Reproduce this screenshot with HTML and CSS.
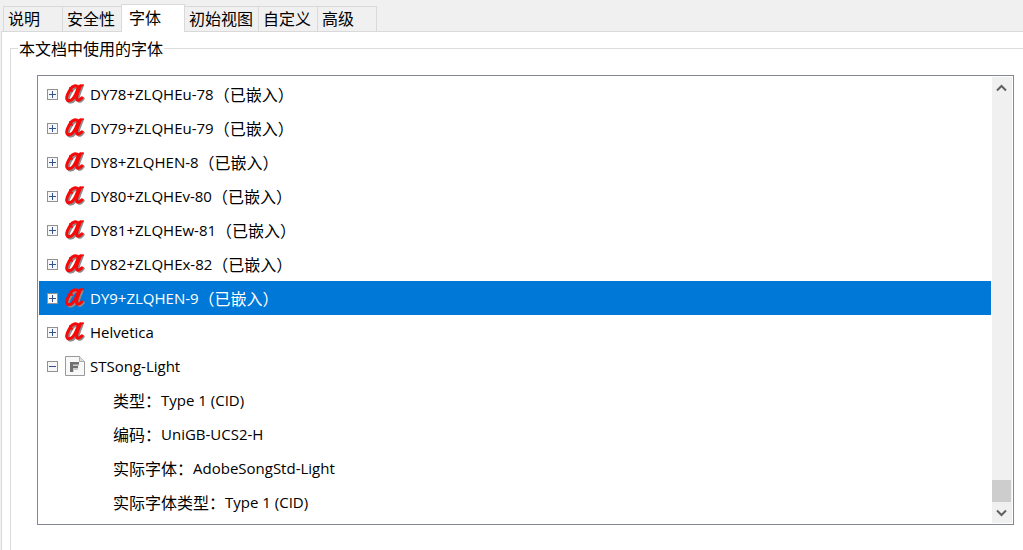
FILE: index.html
```
<!DOCTYPE html>
<html lang="zh-CN">
<head>
    <meta charset="utf-8">
    <title>文档属性</title>
    <link rel="stylesheet" href="styles.css">
</head>
<body>
    <svg class="defs" aria-hidden="true">
        <symbol id="icon-a" viewBox="0 0 20 20">
            <g class="a-shadow" transform="translate(1.500 1.500)">
                <path d="M13 3C11 1 7.500 1.500 5.500 5 3.300 8.500 1 12.500 1.800 15c.8 2.600 4 1.800 6-.3C10.500 12 12 7.500 13 3"/>
                <path d="M15.500 1.500c-1.700 4.500-4.500 9.500-3.800 13 .5 2.200 3 1.500 5-1.300"/>
            </g>
            <g class="a-face">
                <path d="M13.500 3C11 1 7.500 1.500 5.500 5 3.300 8.500 1 12.500 1.800 15c.8 2.600 4 1.800 6-.3C10.500 12 12 7.500 13.500 3"/>
                <path d="M15.500 1.800c-1.700 4.500-4.500 9.500-3.800 13 .5 2.200 3.200 1.500 5.200-1"/>
                <path class="thin" d="M14.500 2L18 1.200M5 4v2.500l2 .3"/>
            </g>
        </symbol>
        <symbol id="icon-f" viewBox="0 0 20 20">
            <path d="M.5.500h14l5 5v14H.5z" fill="#f8f8f8" stroke="#999"/>
            <path d="M14.500.500v5h5" fill="#ddd" stroke="#aaa"/>
            <path d="M6 7h8v3H9v1h4v3H9v2H6z" fill="#ccc"/>
            <path d="M5 6h9v2.500H8V10h5v2H8v4H5z" fill="#707070"/>
        </symbol>
        <symbol id="icon-plus" viewBox="0 0 11 11">
            <rect x=".5" y=".5" width="10" height="10" fill="#f7f7f7" stroke="#919191"/>
            <path d="M2 5.500h7M5.500 2v7" stroke="#34528f"/>
        </symbol>
        <symbol id="icon-minus" viewBox="0 0 11 11">
            <rect x=".5" y=".5" width="10" height="10" fill="#f7f7f7" stroke="#919191"/>
            <path d="M2 5.500h7" stroke="#34528f"/>
        </symbol>
    </svg>

    <div class="tabs" role="tablist">
        <button class="tab" role="tab">说明</button>
        <button class="tab" role="tab">安全性</button>
        <button class="tab active" role="tab" aria-selected="true">字体</button>
        <button class="tab" role="tab">初始视图</button>
        <button class="tab" role="tab">自定义</button>
        <button class="tab" role="tab">高级</button>
    </div>

    <main class="page">
        <fieldset class="group">
            <legend>本文档中使用的字体</legend>
            <div class="listbox">
                <ul class="tree" role="tree">
                    <li class="row" role="treeitem">
                        <button class="toggle" aria-label="展开"><svg><use href="#icon-plus"/></svg></button>
                        <svg class="icon"><use href="#icon-a"/></svg>
                        <span class="latin">DY78+ZLQHEu-78</span><span>（已嵌入）</span>
                    </li>
                    <li class="row" role="treeitem">
                        <button class="toggle" aria-label="展开"><svg><use href="#icon-plus"/></svg></button>
                        <svg class="icon"><use href="#icon-a"/></svg>
                        <span class="latin">DY79+ZLQHEu-79</span><span>（已嵌入）</span>
                    </li>
                    <li class="row" role="treeitem">
                        <button class="toggle" aria-label="展开"><svg><use href="#icon-plus"/></svg></button>
                        <svg class="icon"><use href="#icon-a"/></svg>
                        <span class="latin">DY8+ZLQHEN-8</span><span>（已嵌入）</span>
                    </li>
                    <li class="row" role="treeitem">
                        <button class="toggle" aria-label="展开"><svg><use href="#icon-plus"/></svg></button>
                        <svg class="icon"><use href="#icon-a"/></svg>
                        <span class="latin">DY80+ZLQHEv-80</span><span>（已嵌入）</span>
                    </li>
                    <li class="row" role="treeitem">
                        <button class="toggle" aria-label="展开"><svg><use href="#icon-plus"/></svg></button>
                        <svg class="icon"><use href="#icon-a"/></svg>
                        <span class="latin">DY81+ZLQHEw-81</span><span>（已嵌入）</span>
                    </li>
                    <li class="row" role="treeitem">
                        <button class="toggle" aria-label="展开"><svg><use href="#icon-plus"/></svg></button>
                        <svg class="icon"><use href="#icon-a"/></svg>
                        <span class="latin">DY82+ZLQHEx-82</span><span>（已嵌入）</span>
                    </li>
                    <li class="row selected" role="treeitem" aria-selected="true">
                        <button class="toggle" aria-label="展开"><svg><use href="#icon-plus"/></svg></button>
                        <svg class="icon"><use href="#icon-a"/></svg>
                        <span class="latin">DY9+ZLQHEN-9</span><span>（已嵌入）</span>
                    </li>
                    <li class="row" role="treeitem">
                        <button class="toggle" aria-label="展开"><svg><use href="#icon-plus"/></svg></button>
                        <svg class="icon"><use href="#icon-a"/></svg>
                        <span class="latin">Helvetica</span>
                    </li>
                    <li role="treeitem" aria-expanded="true">
                        <div class="row">
                            <button class="toggle" aria-label="折叠"><svg><use href="#icon-minus"/></svg></button>
                            <svg class="icon"><use href="#icon-f"/></svg>
                            <span class="latin">STSong-Light</span>
                        </div>
                        <ul class="details" role="group">
                            <li class="row"><span>类型：</span><span class="latin">Type 1 (CID)</span></li>
                            <li class="row"><span>编码：</span><span class="latin">UniGB-UCS2-H</span></li>
                            <li class="row"><span>实际字体：</span><span class="latin">AdobeSongStd-Light</span></li>
                            <li class="row"><span>实际字体类型：</span><span class="latin">Type 1 (CID)</span></li>
                        </ul>
                    </li>
                </ul>
                <div class="scrollbar">
                    <button class="arrow" aria-label="向上滚动"><svg viewBox="0 0 11 8"><path d="M1 6.500l4.500-4.500L10 6.500"/></svg></button>
                    <div class="thumb"></div>
                    <button class="arrow" aria-label="向下滚动"><svg viewBox="0 0 11 8"><path d="M1 1.500L5.500 6 10 1.500"/></svg></button>
                </div>
            </div>
        </fieldset>
    </main>
</body>
</html>
```
FILE: styles.css
```
* {
    box-sizing: border-box;
}
body {
    margin: 0;
    height: 100vh;
    display: flex;
    flex-direction: column;
    overflow: hidden;
    background: #f0f0f0;
    color: #000;
    font-family: "Noto Sans CJK SC", sans-serif;
    font-size: 16px;
    line-height: 24px;
}
button {
    font: inherit;
    color: inherit;
    border: 0;
    padding: 0;
    background: none;
}
ul {
    list-style: none;
    margin: 0;
    padding: 0;
}
.defs {
    display: none;
}

/* tabs */
.tabs {
    display: flex;
    align-items: flex-end;
    height: 32px;
    padding-left: 3px;
    flex-shrink: 0;
}
.tab {
    height: 26px;
    min-width: 60px;
    padding: 0 5px 2px 4px;
    margin-right: -1px;
    border: 1px solid #d9d9d9;
    background: #f0f0f0;
    line-height: 22px;
    text-align: left;
    white-space: nowrap;
}
.tab.active {
    height: 28px;
    min-width: 64px;
    padding: 0 7px 4px;
    border-bottom: 0;
    background: #fff;
    z-index: 1;
}

/* page */
.page {
    flex: 1;
    display: flex;
    margin: -1px 0 0 1px;
    padding: 4px 0 0 8px;
    border: 1px solid #d9d9d9;
    border-width: 1px 0 0 1px;
    background: #fff;
}
.group {
    flex: 1;
    min-width: 0;
    margin: 0;
    padding: 15px 9px 0 26px;
    border: 1px solid #dcdcdc;
    border-width: 1px 0 0 1px;
}
.group legend {
    margin-left: -19px;
    padding: 0 1px;
    line-height: 24px;
}
.listbox {
    display: flex;
    padding: 1px;
    border: 1px solid #828790;
}
.tree {
    flex: 1;
    padding: 0 1px 4px 0;
}

/* rows */
.row {
    display: flex;
    align-items: center;
    height: 34px;
    padding-left: 8px;
    white-space: nowrap;
}
.row.selected {
    background: #0078d7;
    color: #fff;
}
.details .row {
    padding-left: 74px;
}
.latin {
    font-family: "Open Sans", "Noto Sans", sans-serif;
    font-size: 15px;
}
.toggle,
.toggle svg {
    display: block;
    width: 11px;
    height: 11px;
}
.toggle {
    margin-right: 7px;
}
.icon {
    width: 20px;
    height: 20px;
    margin-right: 5px;
}
.a-shadow,
.a-face {
    fill: none;
    stroke-width: 3;
    stroke-linecap: round;
    stroke-linejoin: round;
}
.a-shadow {
    stroke: #8c8c8c;
}
.a-face {
    stroke: #f80808;
}
.a-face .thin {
    stroke-width: 2;
}

/* scrollbar */
.scrollbar {
    display: flex;
    flex-direction: column;
    width: 20px;
    background: #f0f0f0;
}
.arrow {
    display: flex;
    align-items: center;
    justify-content: center;
    height: 21px;
    padding-right: 1px;
}
.arrow svg {
    width: 11px;
    height: 8px;
    fill: none;
    stroke: #606060;
    stroke-width: 2;
}
.thumb {
    width: 19px;
    height: 22px;
    margin-top: auto;
    background: #cdcdcd;
}
```
